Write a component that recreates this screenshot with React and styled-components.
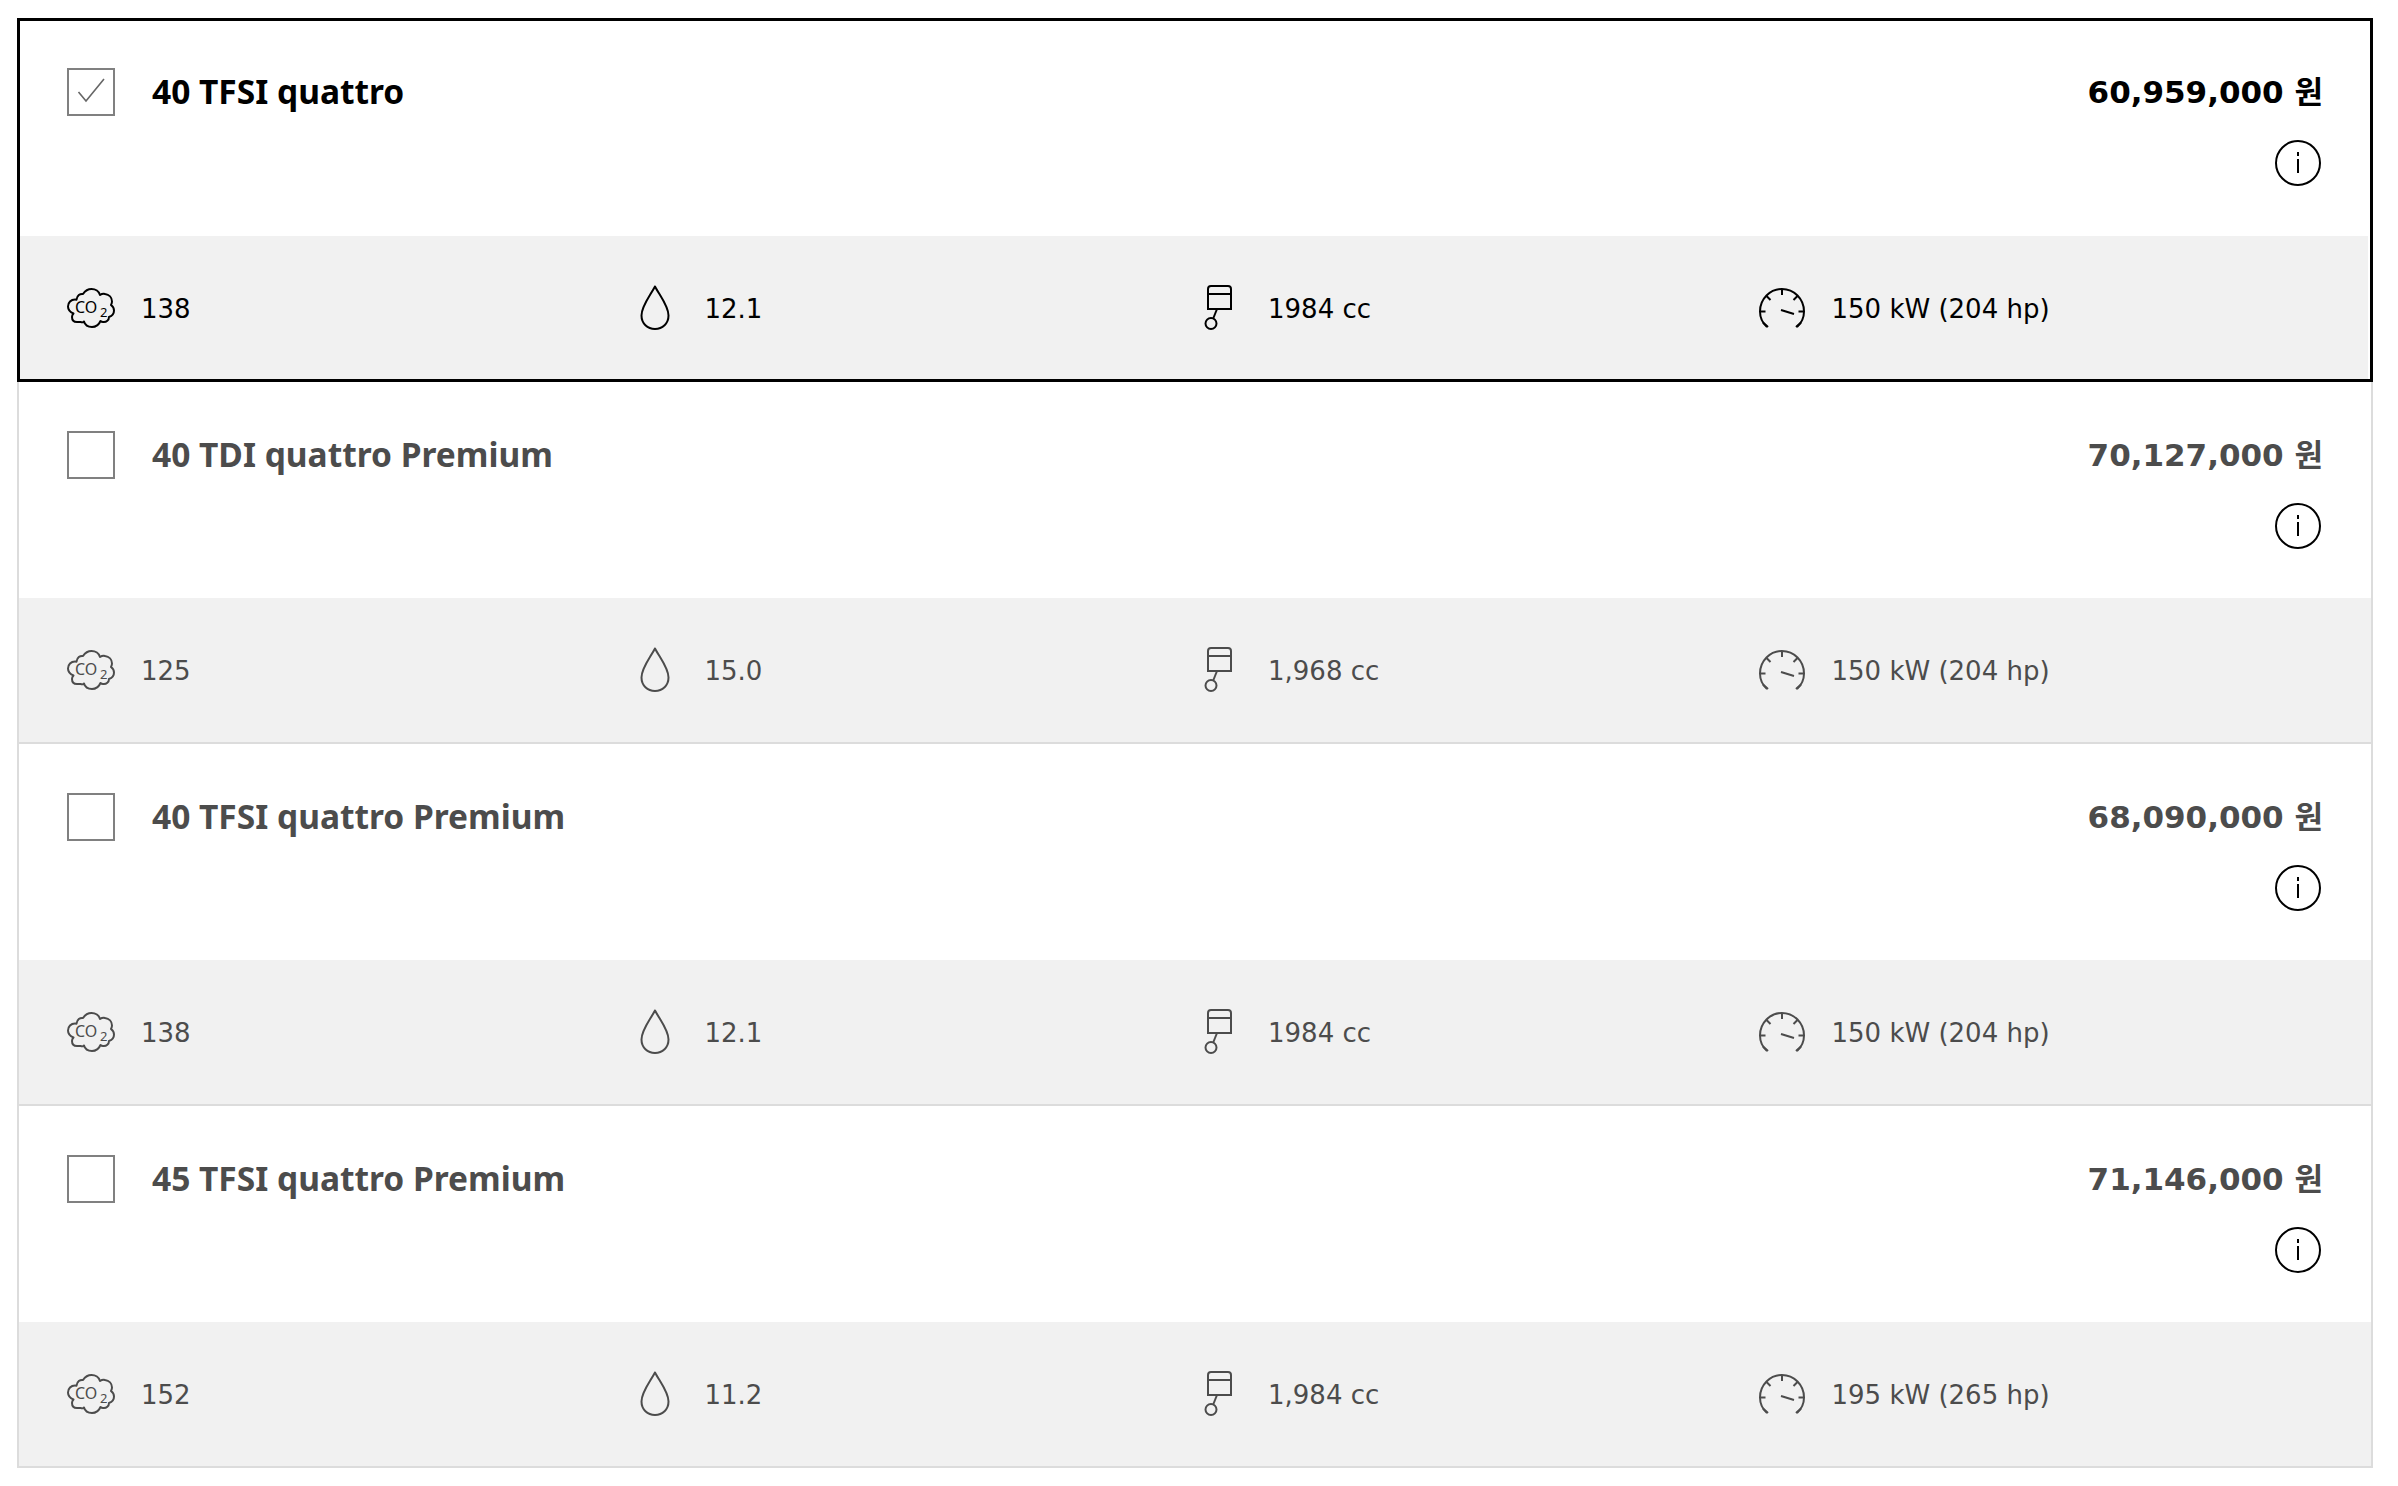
import React from 'react';
import styled, { createGlobalStyle } from 'styled-components';

const GlobalStyle = createGlobalStyle`
  html, body {
    margin: 0;
    background: #fff;
    font-family: "Noto Sans", "Noto Sans CJK KR", sans-serif;
  }
`;

const List = styled.div`
  width: 2356px;
  padding: 18px 0 0 17px;
`;

const Card = styled.div`
  box-sizing: border-box;
  height: ${({ $selected }) => ($selected ? '364px' : '362px')};
  border: solid ${({ $selected }) => ($selected ? '#000' : '#dcdcdc')};
  border-width: ${({ $selected }) => ($selected ? '3px' : '0 2px 2px')};
  color: ${({ $selected }) => ($selected ? '#000' : '#4c4c4c')};
  display: flex;
  flex-direction: column;
`;

const Head = styled.div`
  flex: 1;
  display: flex;
  justify-content: space-between;
  padding: ${({ $selected }) => ($selected ? '47px 47px 0 47px' : '49px 48px 0 48px')};
`;

const TitleRow = styled.label`
  display: flex;
  align-items: center;
  height: 48px;
  gap: 37px;
`;

const Box = styled.span`
  box-sizing: border-box;
  width: 48px;
  height: 48px;
  border: 2px solid #808080;
  display: flex;
  align-items: center;
  justify-content: center;
  color: #666;
`;

const Title = styled.span`
  font-size: 33.500px;
  font-weight: 700;
  line-height: 48px;
  margin-top: -3px;
`;

const PriceCol = styled.div`
  display: flex;
  flex-direction: column;
  align-items: flex-end;
  gap: 24px;
`;

const Price = styled.span`
  font-family: "DejaVu Sans", "Noto Sans CJK KR", sans-serif;
  font-size: 31px;
  font-weight: 700;
  line-height: 48px;
`;

const InfoButton = styled.span`
  display: block;
  width: 46px;
  height: 46px;
  margin-right: 2px;
  color: #000;
`;

const Specs = styled.div`
  height: ${({ $selected }) => ($selected ? '143px' : '144px')};
  background: #f1f1f1;
  display: grid;
  grid-template-columns: repeat(4, 563.5px);
  align-items: center;
  margin: ${({ $selected }) => ($selected ? '0 2px 0 0' : '0')};
  box-sizing: border-box;
  padding-left: ${({ $selected }) => ($selected ? '47px' : '48px')};
`;

const Spec = styled.div`
  display: flex;
  align-items: center;
  gap: 26px;
`;

const SpecIcon = styled.svg`
  width: 48px;
  height: 48px;
  flex: none;
  fill: none;
  stroke: currentColor;
  stroke-width: 2;
`;

const SpecValue = styled.span`
  font-family: "DejaVu Sans", sans-serif;
  font-size: 26px;
  line-height: 40px;
  margin-top: 2px;
`;

const IconText = styled.text`
  font-family: "Noto Sans", sans-serif;
  fill: currentColor;
  stroke: none;
`;

const Co2Icon = () => (
  <SpecIcon viewBox="0 0 48 48">
    <path
      strokeLinejoin="round"
      d="M10 38c-3 0-5-2-5-5 0-1.500.5-2.500 1.500-3.500C3 28 1 25.500 1 22.500c0-4 3-7 7-7 .5 0 1 0 1.500.2C10 11.500 13 9.500 16 10 18 7 21 5 24.500 5c4 0 7.500 2.500 8.500 6 1.500-1 3.500-1.500 5-1 4 .5 7 3.500 7 7.500 0 1.500-.5 2.500-1 3.500 2 1.500 3 3.500 3 5.500 0 3-2 5.500-5 6.500 0 3-2.500 5.500-6 5-1 0-2-.5-2.500-1-1.500 3.500-4.500 6-8.500 6-3.500 0-7-2-8-5.500-1 1-2.500 1-3 .5z"
    />
    <IconText x="8" y="29" fontSize="16">CO</IconText>
    <IconText x="33" y="33" fontSize="13">2</IconText>
  </SpecIcon>
);

const DropIcon = () => (
  <SpecIcon viewBox="0 0 48 48">
    <path strokeLinejoin="round" d="M24 2.500C19 12 10.500 22 10.500 31.500 10.500 39.500 16.500 45 24 45s13.500-5.500 13.500-13.500C37.500 22 29 12 24 2.500z" />
  </SpecIcon>
);

const PistonIcon = () => (
  <SpecIcon viewBox="0 0 48 48">
    <path d="M14 25V5c0-2 1-3 3-3h17c2 0 3 1 3 3v20zM14 10h23" />
    <path d="M23 25l-4 10" />
    <circle cx="17" cy="39.500" r="5.500" />
  </SpecIcon>
);

const GaugeIcon = () => (
  <SpecIcon viewBox="0 0 48 48">
    <path d="M9 43C4 38.500 2 33 2 27.500 2 15 12 5 24 5s22 10 22 22.500c0 5.500-2 11-7 15.500" />
    <path d="M24 5v6M2 27.500h5.500M46 27.500h-5.500M8.500 12l4 4M39.500 12l-4 4M5 38.500l5 4.500M43 38.500l-5 4.500M23 26l13 4" />
  </SpecIcon>
);

const InfoIcon = () => (
  <InfoButton>
    <svg viewBox="0 0 46 46" width="46" height="46" fill="none" stroke="currentColor" strokeWidth="2">
      <circle cx="23" cy="23" r="22" />
      <path d="M23 19v14M23 12v4" />
    </svg>
  </InfoButton>
);

const trims = [
  { name: '40 TFSI quattro', price: '60,959,000 원', co2: '138', fuel: '12.1', cc: '1984 cc', power: '150 kW (204 hp)', selected: true },
  { name: '40 TDI quattro Premium', price: '70,127,000 원', co2: '125', fuel: '15.0', cc: '1,968 cc', power: '150 kW (204 hp)' },
  { name: '40 TFSI quattro Premium', price: '68,090,000 원', co2: '138', fuel: '12.1', cc: '1984 cc', power: '150 kW (204 hp)' },
  { name: '45 TFSI quattro Premium', price: '71,146,000 원', co2: '152', fuel: '11.2', cc: '1,984 cc', power: '195 kW (265 hp)' },
];

const App = () => (
  <>
    <GlobalStyle />
    <List>
      {trims.map((t) => (
        <Card key={t.name} $selected={t.selected}>
          <Head $selected={t.selected}>
            <TitleRow>
              <Box>
                {t.selected && (
                  <svg width="30" height="30" viewBox="0 0 30 30" fill="none" stroke="currentColor" strokeWidth="1.600">
                    <path d="M2.500 15l7.500 9L28 2" />
                  </svg>
                )}
              </Box>
              <Title>{t.name}</Title>
            </TitleRow>
            <PriceCol>
              <Price>{t.price}</Price>
              <InfoIcon />
            </PriceCol>
          </Head>
          <Specs $selected={t.selected}>
            <Spec><Co2Icon /><SpecValue>{t.co2}</SpecValue></Spec>
            <Spec><DropIcon /><SpecValue>{t.fuel}</SpecValue></Spec>
            <Spec><PistonIcon /><SpecValue>{t.cc}</SpecValue></Spec>
            <Spec><GaugeIcon /><SpecValue>{t.power}</SpecValue></Spec>
          </Specs>
        </Card>
      ))}
    </List>
  </>
);

export default App;
